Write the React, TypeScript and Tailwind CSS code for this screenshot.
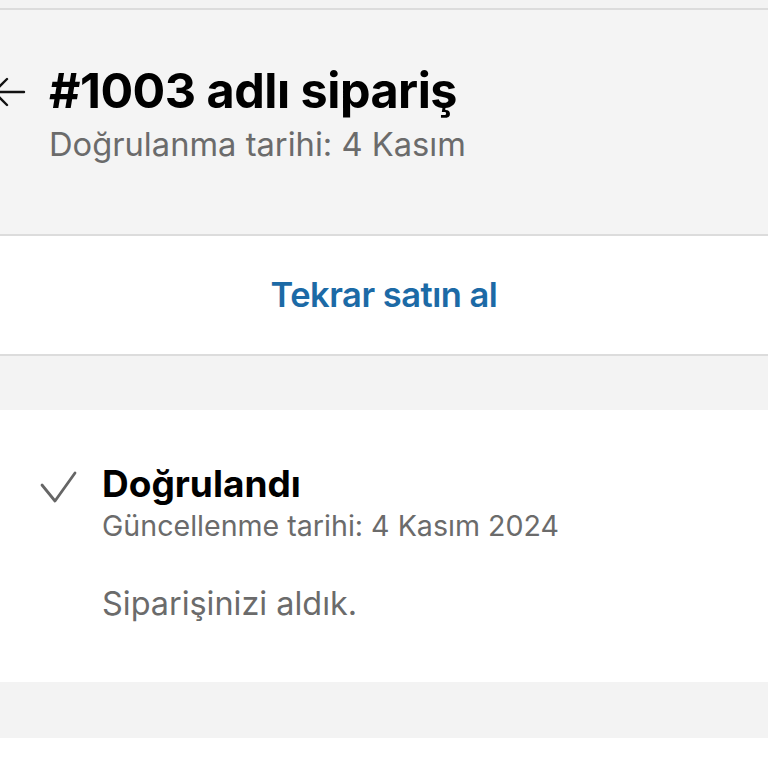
import React from 'react';

export default function App() {
    return (
        <div className="w-[768px] h-[768px] overflow-hidden bg-[#f3f3f3] font-['Inter','Noto_Sans',sans-serif]">
            <div className="h-[10px] bg-[#f3f3f3] border-b-2 border-[#dcdcdc]" />
            <div className="h-[226px] bg-[#f4f4f4] border-b-2 border-[#dcdcdc] relative">
                <svg className="absolute left-[-10px] top-[67px]" width="36" height="34" viewBox="0 0 36 34" fill="none" stroke="#111" strokeWidth="2.4" strokeLinecap="round" strokeLinejoin="round">
                    <path d="M34 15H4" />
                    <path d="M17 2L4 15l13 13" />
                </svg>
                <div className="pl-[49px] pt-[52px]">
                    <h1 className="text-[48.5px] leading-[58px] font-bold text-black tracking-[-0.5px]">#1003 adlı sipariş</h1>
                    <p className="text-[32.7px] leading-[40px] text-[#6b6b6b] mt-[4px]">Doğrulanma tarihi: 4 Kasım</p>
                </div>
            </div>
            <div className="h-[120px] bg-white border-b-2 border-[#dcdcdc] flex items-center justify-center">
                <span className="text-[34.5px] font-semibold text-[#1c6aa6] tracking-[-0.5px]">Tekrar satın al</span>
            </div>
            <div className="h-[54px]" />
            <div className="h-[272px] bg-white pt-[52px] flex gap-[24px] pl-[40px]">
                <svg className="mt-[9px] shrink-0" width="38" height="32" viewBox="0 0 38 32" fill="none" stroke="#666" strokeWidth="2.8" strokeLinecap="round" strokeLinejoin="round">
                    <path d="M2 14l13 16L35 2" />
                </svg>
                <div>
                    <div className="text-[37px] leading-[44px] font-bold text-black">Doğrulandı</div>
                    <div className="text-[28.6px] leading-[36px] text-[#6b6b6b] mt-[2px]">Güncellenme tarihi: 4 Kasım 2024</div>
                    <div className="text-[32.4px] leading-[40px] text-[#6b6b6b] mt-[40px]">Siparişinizi aldık.</div>
                </div>
            </div>
            <div className="h-[56px]" />
            <div className="h-[40px] bg-white" />
        </div>
    );
}
